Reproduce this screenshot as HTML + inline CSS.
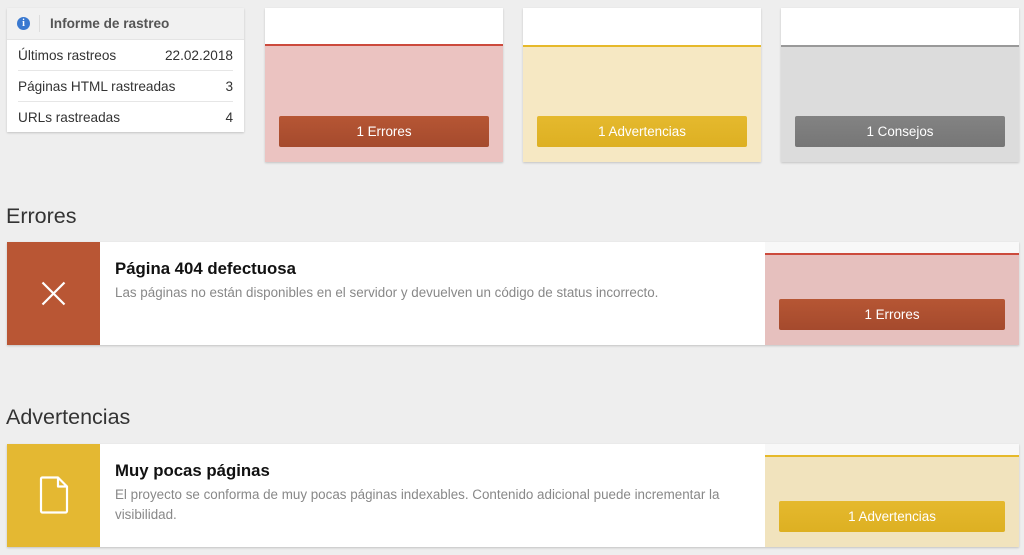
<!DOCTYPE html>
<html><head><meta charset="utf-8"><style>
*{margin:0;padding:0;box-sizing:border-box}
body{width:1024px;height:555px;background:#eeeeee;font-family:"Liberation Sans",sans-serif;position:relative;overflow:hidden}
.abs{position:absolute}
.card{background:#fff;box-shadow:0 1px 2px rgba(0,0,0,.18)}
.info .hd{position:absolute;left:0;top:0;width:100%;height:32px;background:#f1f1f1;border-bottom:1px solid #e4e4e4}
.info .row{position:absolute;left:11px;right:11px;font-size:13.6px;color:#333;height:31px;line-height:31px}
.info .row span{float:right}
.sep{border-bottom:1px solid #e6e6e6}
.btn{position:absolute;color:#fff;font-size:13.4px;text-align:center;border-radius:2px}
.h2{position:absolute;left:6px;font-size:21.5px;color:#333}
.title{position:absolute;font-size:16.8px;font-weight:bold;color:#111}
.desc{position:absolute;font-size:13.4px;color:#888;line-height:20px;width:640px}
</style></head><body>

<div class="abs card info" style="left:7px;top:8px;width:237px;height:124px">
 <div class="hd">
  <div class="abs" style="left:10px;top:9px;width:13px;height:13px;border-radius:50%;background:#3a79d0;color:#fff;font-size:10px;font-weight:bold;text-align:center;line-height:13px;font-family:'Liberation Serif',serif">i</div>
  <div class="abs" style="left:32px;top:7px;width:1px;height:17px;background:#ddd"></div>
  <div class="abs" style="left:43px;top:8px;font-size:13.6px;font-weight:bold;color:#555">Informe de rastreo</div>
 </div>
 <div class="row sep" style="top:32px">Últimos rastreos<span>22.02.2018</span></div>
 <div class="row sep" style="top:63px">Páginas HTML rastreadas<span>3</span></div>
 <div class="row" style="top:94px">URLs rastreadas<span>4</span></div>
</div>

<div class="abs card" style="left:265px;top:8px;width:238px;height:154px;background:#ebc3c1">
 <div class="abs" style="left:0;top:0;width:100%;height:38px;background:#fff;border-bottom:2px solid #cc4a3c"></div>
 <div class="btn" style="left:14px;top:108px;width:210px;height:31px;line-height:31px;background:linear-gradient(#b65634,#a54a2d)">1 Errores</div>
</div>
<div class="abs card" style="left:523px;top:8px;width:238px;height:154px;background:#f6e8c3">
 <div class="abs" style="left:0;top:0;width:100%;height:39px;background:#fff;border-bottom:2px solid #e6b92a"></div>
 <div class="btn" style="left:14px;top:108px;width:210px;height:31px;line-height:31px;background:linear-gradient(#e5b92e,#ddb022)">1 Advertencias</div>
</div>
<div class="abs card" style="left:781px;top:8px;width:238px;height:154px;background:#dcdcdc">
 <div class="abs" style="left:0;top:0;width:100%;height:39px;background:#fff;border-bottom:2px solid #999"></div>
 <div class="btn" style="left:14px;top:108px;width:210px;height:31px;line-height:31px;background:linear-gradient(#838383,#767676)">1 Consejos</div>
</div>

<div class="h2" style="top:204px">Errores</div>
<div class="abs card" style="left:7px;top:242px;width:1012px;height:103px">
 <div class="abs" style="left:0;top:0;width:93px;height:103px;background:#b95634">
  <svg class="abs" style="left:34px;top:39px" width="25" height="25" viewBox="0 0 25 25"><path d="M1.5 1.5L23.5 23.5M23.5 1.5L1.5 23.5" stroke="#fff" stroke-width="2.2" fill="none"/></svg>
 </div>
 <div class="title" style="left:108px;top:17px">Página 404 defectuosa</div>
 <div class="desc" style="left:108px;top:41px">Las páginas no están disponibles en el servidor y devuelven un código de status incorrecto.</div>
 <div class="abs" style="left:758px;top:0;width:254px;height:103px;background:#e6c0be">
  <div class="abs" style="left:0;top:0;width:100%;height:13px;background:#f8f8f8;border-bottom:2px solid #cc4a3c"></div>
  <div class="btn" style="left:14px;top:57px;width:226px;height:31px;line-height:31px;background:linear-gradient(#b65634,#a54a2d)">1 Errores</div>
 </div>
</div>

<div class="h2" style="top:405px">Advertencias</div>
<div class="abs card" style="left:7px;top:444px;width:1012px;height:103px">
 <div class="abs" style="left:0;top:0;width:93px;height:103px;background:#e4b832">
  <svg class="abs" style="left:32px;top:32px" width="30" height="38" viewBox="0 0 30 38"><path d="M3 1.5H19L28 10.5V35a1.5 1.5 0 0 1-1.5 1.5H3.5A1.5 1.5 0 0 1 2 35V3A1.5 1.5 0 0 1 3 1.5ZM19 1.5V10.5H28" stroke="#fff" stroke-width="2.2" fill="none" stroke-linejoin="round"/></svg>
 </div>
 <div class="title" style="left:108px;top:17px">Muy pocas páginas</div>
 <div class="desc" style="left:108px;top:41px;width:620px">El proyecto se conforma de muy pocas páginas indexables. Contenido adicional puede incrementar la visibilidad.</div>
 <div class="abs" style="left:758px;top:0;width:254px;height:103px;background:#f1e3bd">
  <div class="abs" style="left:0;top:0;width:100%;height:13px;background:#f8f8f8;border-bottom:2px solid #e6b92a"></div>
  <div class="btn" style="left:14px;top:57px;width:226px;height:31px;line-height:31px;background:linear-gradient(#e5b92e,#ddb022)">1 Advertencias</div>
 </div>
</div>
</body></html>
